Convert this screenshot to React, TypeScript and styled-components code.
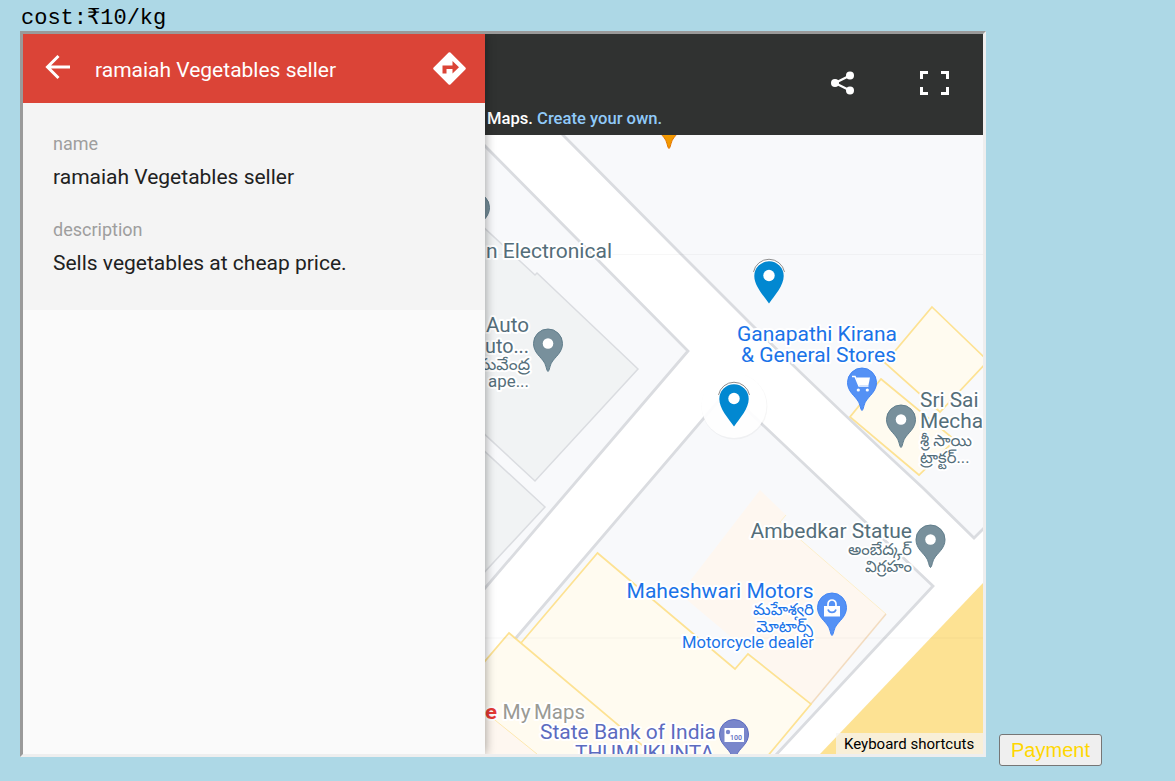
import React from "react";
import styled, { createGlobalStyle } from "styled-components";

const GlobalStyle = createGlobalStyle`
  body {
    margin: 0;
    background: #add8e6;
    overflow: hidden;
  }
`;

const Page = styled.main`
  box-sizing: border-box;
  height: 781px;
  padding: 5px 0 0 20px;
  font-family: Roboto, "Liberation Sans", sans-serif;
`;

const Cost = styled.div`
  box-sizing: border-box;
  height: 26px;
  padding-left: 1px;
  font: 22px/28px "Liberation Mono", monospace;
  color: #000;
`;

const EmbedRow = styled.div`
  display: flex;
  align-items: flex-end;
  gap: 13px;
`;

const Frame = styled.section`
  display: flex;
  width: 960px;
  height: 720px;
  border: 3px solid;
  border-color: #9a9a9a #eeeeee #eeeeee #9a9a9a;
  overflow: hidden;
`;

const SidePanel = styled.aside`
  position: relative;
  z-index: 1;
  width: 462px;
  flex: none;
  background: #fafafa;
  box-shadow: 0 0 10px rgba(0, 0, 0, 0.4);
`;

const PanelHeader = styled.header`
  display: flex;
  align-items: center;
  height: 69px;
  padding: 0 18px 0 20px;
  background: #db4437;
  color: #fff;
`;

const PanelTitle = styled.h1`
  flex: 1;
  margin: 3px 0 0 22px;
  font-size: 21px;
  font-weight: 400;
  line-height: 28px;
  white-space: nowrap;
`;

const Details = styled.dl`
  box-sizing: border-box;
  height: 207px;
  margin: 0;
  padding: 29px 30px 0;
  background: #f4f4f4;
`;

const Term = styled.dt`
  height: 24px;
  font-size: 18px;
  line-height: 24px;
  color: #9e9e9e;
`;

const Value = styled.dd`
  margin: 6px 0 26px;
  height: 30px;
  font-size: 21px;
  line-height: 30px;
  color: #212121;
  white-space: nowrap;
`;

const MapPane = styled.div`
  display: flex;
  flex-direction: column;
  flex: 1;
  position: relative;
`;

const MapHeader = styled.header`
  box-sizing: border-box;
  display: flex;
  flex-direction: column;
  justify-content: space-between;
  height: 101px;
  padding: 33px 31px 5px 2px;
  background: #303231;
`;

const MapActions = styled.div`
  display: flex;
  justify-content: flex-end;
  gap: 62px;
`;

const Notice = styled.div`
  font-size: 16.6px;
  font-weight: 500;
  line-height: 22px;
  color: #fff;
  white-space: nowrap;
`;

const NoticeLink = styled.span`
  color: #90caf9;
`;

const Shortcuts = styled.div`
  position: absolute;
  right: 0;
  bottom: 0;
  box-sizing: border-box;
  width: 147px;
  height: 21px;
  padding-left: 8px;
  background: rgba(245, 245, 245, 0.7);
  font-size: 15px;
  line-height: 22px;
  color: #000;
  white-space: nowrap;
`;

const PayButton = styled.button`
  box-sizing: border-box;
  width: 103px;
  height: 32px;
  margin-bottom: -9px;
  padding: 0;
  border: 1px solid #767676;
  border-radius: 3px;
  background: #efefef;
  color: #ffd700;
  font: 20px/30px "Liberation Sans", Arial, sans-serif;
`;

const MapCanvas = styled.svg`
  display: block;
  width: 498px;
  height: 619px;
  font-family: Roboto, "Noto Sans Telugu", "Noto Sans", sans-serif;
`;

const HaloText = styled.text<{ $tone: string; $size: number; $weight?: number }>`
  fill: ${(p) => p.$tone};
  font-size: ${(p) => p.$size}px;
  font-weight: ${(p) => p.$weight ?? 400};
  stroke: #fff;
  stroke-width: 4px;
  stroke-linejoin: round;
  paint-order: stroke;
`;

const SLATE = "#546e7a";
const BLUE = "#1a73e8";
const INDIGO = "#5c6bc0";

type LabelProps = {
  x: number;
  y: number;
  width: number;
  size: number;
  tone: string;
  weight?: number;
  children: React.ReactNode;
};

function Label({ x, y, width, size, tone, weight, children }: LabelProps) {
  return (
    <HaloText x={x} y={y} textLength={width} lengthAdjust="spacingAndGlyphs" $tone={tone} $size={size} $weight={weight}>
      {children}
    </HaloText>
  );
}

type PinProps = { x: number; y: number; fill: string; edge: string; children?: React.ReactNode };

function Pin({ x, y, fill, edge, children }: PinProps) {
  return (
    <g transform={`translate(${x} ${y})`}>
      <path
        d="M0 28C-1.6 27-1.7 22-4 18.500C-7 13.500-14.500 9-14.500 0A14.500 14.500 0 0 1 14.500 0C14.500 9 7 13.500 4 18.500C1.700 22 1.600 27 0 28Z"
        fill={fill}
        stroke={edge}
        strokeWidth="1"
      />
      {children ?? <circle r="5.300" fill="#fff" />}
    </g>
  );
}

function Marker({ x, y }: { x: number; y: number }) {
  return (
    <g transform={`translate(${x} ${y})`}>
      <path d="M-15.500-4A15.800 15.800 0 0 1 15.500-4" fill="#fff" stroke="#8f8f8f" strokeWidth="1" />
      <path
        d="M0 27.500C-6 19-14.700 9.500-14.700 0A14.700 14.700 0 0 1 14.700 0C14.700 9.500 6 19 0 27.500Z"
        fill="#0288d1"
      />
      <circle r="5.700" cy="-0.500" fill="#fff" />
    </g>
  );
}

function CityMap() {
  return (
    <MapCanvas viewBox="485 135 498 619">
      <rect x="485" y="135" width="498" height="619" fill="#fff" />
      <g fill="#f8f9fb" stroke="#dadce0" strokeWidth="2.800">
        <path d="M480 141L688 351L480 594Z" />
        <path d="M560 132L680 253L752 325Q832 404 923 488L974 538L990 522V130Z" />
        <path d="M727 391L933 586L774 757H480V680Z" />
      </g>
      <path d="M983 583V754H820Z" fill="#fde293" />
      <g fill="#f1f3f4" stroke="#dadce0" strokeWidth="1.500">
        <path d="M480 224L535 275L537 273L638 369L535 481L480 430Z" />
        <path d="M480 447L545 507L480 577Z" />
      </g>
      <path
        d="M760 490L786 515L780 522L886 614L811 704L680 594Z"
        fill="#fef7f0"
      />
      <path d="M786 515L780 522L886 614" fill="none" stroke="#fdecc0" strokeWidth="0.800" />
      <path d="M886 614L811 704" stroke="#f3dcc0" strokeWidth="1.500" />
      <g fill="#fffbf0" stroke="#fde293" strokeWidth="1.700">
        <path d="M597.500 553L735 669L748 654L811 704L766 758H480V690L521 643Z" />
        <path d="M509 633L655 756H480V667Z" />
        <path d="M932 307L988 361L940 412L885 363Z" />
        <path d="M881 379L955 440L919 475L850 417Z" />
      </g>
      <path d="M485 712L537 754H485Z" fill="#fef7f0" />
      <path d="M485 712L537 754" stroke="#fde8b0" />
      <path d="M485 254.500H983M485 638H983" stroke="#000" strokeOpacity="0.03" />

      <Pin x={669} y={120.5} fill="#f29900" edge="#e37400" />
      <Pin x={475} y={207.5} fill="#78909c" edge="#607d8b" />
      <Pin x={548} y={343.5} fill="#78909c" edge="#607d8b" />
      <Pin x={901} y={419.5} fill="#78909c" edge="#607d8b" />
      <Pin x={930.5} y={539.5} fill="#78909c" edge="#607d8b" />
      <Pin x={862} y={382.5} fill="#5491f5" edge="#4285f4">
        <path d="M-10-6H-7L-3 3.500H6.500" fill="none" stroke="#fff" strokeWidth="1.500" />
        <path d="M-6-5H8L6.500 2.500H-3.500Z" fill="#fff" />
        <circle cx="-3.700" cy="7.500" r="1.600" fill="#fff" />
        <circle cx="5.300" cy="7.500" r="1.600" fill="#fff" />
      </Pin>
      <Pin x={832} y={607.5} fill="#5491f5" edge="#4285f4">
        <path d="M-8-1.500H8V9H-8Z" fill="#fff" />
        <path d="M-4-1V-3.500A4 4 0 0 1 4-3.500V-1" fill="none" stroke="#fff" strokeWidth="1.700" />
        <path d="M-4 2A4.200 4.200 0 0 0 4 2" fill="none" stroke="#5491f5" strokeWidth="1.700" />
      </Pin>
      <Pin x={734} y={734} fill="#7986cb" edge="#5c6bc0">
        <rect x="-9.500" y="-6" width="19.500" height="14" fill="#fff" />
        <circle cx="-6" cy="-2" r="2.200" fill="#7986cb" />
        <text x="-4" y="6" fontSize="8" fontWeight="500" textLength="12" lengthAdjust="spacingAndGlyphs" fill="#5c6bc0">100</text>
      </Pin>

      <Label x={486} y={258} width={126} size={20.5} tone={SLATE}>n Electronical</Label>
      <Label x={486} y={331.5} width={43} size={20.5} tone={SLATE}>Auto</Label>
      <Label x={485} y={352.5} width={44} size={20.5} tone={SLATE}>uto...</Label>
      <Label x={478} y={370} width={52} size={16} tone={SLATE}>సువేంద్ర</Label>
      <Label x={488} y={386.5} width={41} size={16.5} tone={SLATE}>ape...</Label>
      <Label x={737} y={340.5} width={160} size={20.5} tone={BLUE}>Ganapathi Kirana</Label>
      <Label x={741} y={361.5} width={155} size={20.5} tone={BLUE}>&amp; General Stores</Label>
      <Label x={920} y={407} width={58.5} size={20.5} tone={SLATE}>Sri Sai</Label>
      <Label x={920} y={428} width={63} size={20.5} tone={SLATE}>Mecha</Label>
      <Label x={920} y={446} width={52} size={16} tone={SLATE}>శ్రీ సాయి</Label>
      <Label x={920} y={462.5} width={49.5} size={16} tone={SLATE}>ట్రాక్టర్...</Label>
      <Label x={750.5} y={538} width={161.5} size={20.5} tone={SLATE}>Ambedkar Statue</Label>
      <Label x={848} y={555} width={64} size={16} tone={SLATE}>అంబేద్కర్</Label>
      <Label x={865} y={571.5} width={47} size={16} tone={SLATE}>విగ్రహం</Label>
      <Label x={626.5} y={598} width={187} size={20.5} tone={BLUE}>Maheshwari Motors</Label>
      <Label x={753} y={614.5} width={61} size={16} tone={BLUE}>మహేశ్వరి</Label>
      <Label x={756} y={631.5} width={57} size={16} tone={BLUE}>మోటార్స్</Label>
      <Label x={682} y={648} width={132} size={16.5} tone={BLUE}>Motorcycle dealer</Label>
      <Label x={485} y={718.5} width={12} size={21} tone="#e53935" weight={700}>e</Label>
      <Label x={502.5} y={718.5} width={28} size={21} tone="#9a9a94">My</Label>
      <Label x={534} y={718.5} width={51} size={21} tone="#9a9a94">Maps</Label>
      <Label x={540} y={739} width={176} size={20.5} tone={INDIGO}>State Bank of India</Label>
      <Label x={575} y={759.5} width={139} size={20.5} tone={INDIGO}>THUMUKUNTA</Label>

      <Marker x={769} y={276} />
      <circle cx="734.500" cy="406.500" r="33" fill="#000" fillOpacity="0.035" />
      <circle cx="734" cy="405.500" r="32.500" fill="#fff" fillOpacity="0.93" />
      <Marker x={734} y={399} />
    </MapCanvas>
  );
}

export default function App() {
  return (
    <>
      <GlobalStyle />
      <Page>
        <Cost>cost:₹10/kg</Cost>
        <EmbedRow>
          <Frame>
            <SidePanel>
              <PanelHeader>
                <svg width="30" height="30" viewBox="0 0 30 30" fill="none" stroke="#fff" strokeWidth="3">
                  <path d="M27 13H5M15.500 2L4.500 13L15.500 24" />
                </svg>
                <PanelTitle>ramaiah Vegetables seller</PanelTitle>
                <svg width="34" height="34" viewBox="0 0 34 34">
                  <path d="M16.500 1.500L31.500 16.500L16.500 31.500L1.500 16.500Z" fill="#fff" stroke="#fff" strokeWidth="2.500" strokeLinejoin="round" />
                  <path d="M9.500 21.500V13.500H19.500V9L26 15.200L19.500 21.500V17H13.500V21.500Z" fill="#db4437" />
                </svg>
              </PanelHeader>
              <Details>
                <Term>name</Term>
                <Value>ramaiah Vegetables seller</Value>
                <Term>description</Term>
                <Value>Sells vegetables at cheap price.</Value>
              </Details>
            </SidePanel>
            <MapPane>
              <MapHeader>
                <MapActions>
                  <svg width="32" height="32" viewBox="0 0 32 32" fill="#fff">
                    <path d="M24 8.500L9 16L24 23.500" fill="none" stroke="#fff" strokeWidth="2.200" />
                    <circle cx="24" cy="8.500" r="4" />
                    <circle cx="9" cy="16" r="4" />
                    <circle cx="24" cy="23.500" r="4" />
                  </svg>
                  <svg width="32" height="32" viewBox="0 0 32 32" fill="none" stroke="#fff" strokeWidth="3">
                    <path d="M1.500 12V5.500H8M21 5.500H27.500V12M27.500 20V26.500H21M8 26.500H1.500V20" />
                  </svg>
                </MapActions>
                <Notice>
                  Maps. <NoticeLink>Create your own.</NoticeLink>
                </Notice>
              </MapHeader>
              <CityMap />
              <Shortcuts>Keyboard shortcuts</Shortcuts>
            </MapPane>
          </Frame>
          <PayButton type="button">Payment</PayButton>
        </EmbedRow>
      </Page>
    </>
  );
}
